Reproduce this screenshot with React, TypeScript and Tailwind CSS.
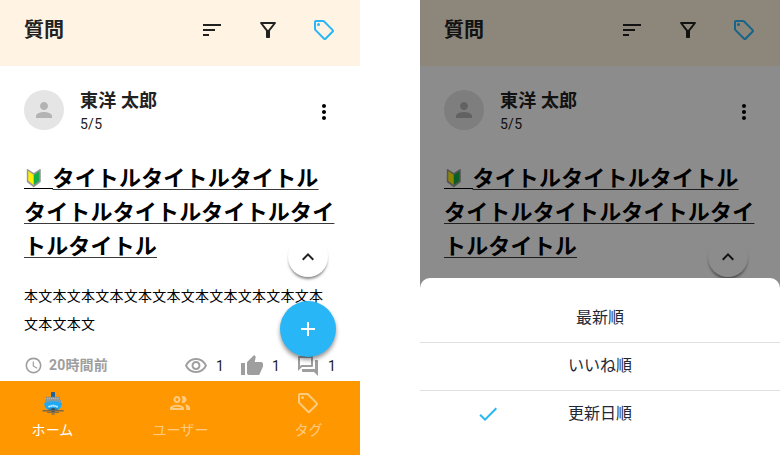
import type { ReactNode } from "react";

type IconProps = { d: string; className?: string; size?: number; children?: ReactNode };

function Icon({ d, className = "", size = 24, children }: IconProps) {
  return (
    <svg viewBox="0 0 24 24" width={size} height={size} fill="currentColor" className={`shrink-0 ${className}`}>
      <path d={d} />
      {children}
    </svg>
  );
}

const SORT = "M3 18h6v-2H3v2zM3 6v2h18V6H3zm0 7h12v-2H3v2z";
const FILTER =
  "M7 6h10l-5.01 6.3L7 6zM4.25 5.61C6.27 8.2 10 13 10 13v6c0 .55.45 1 1 1h2c.55 0 1-.45 1-1v-6s3.72-4.8 5.74-7.39A.998.998 0 0 0 18.95 4H5.04c-.83 0-1.3.95-.79 1.61z";
const TAG =
  "M21.41 11.41l-8.83-8.83C12.21 2.21 11.7 2 11.17 2H4c-1.1 0-2 .9-2 2v7.17c0 .53.21 1.04.59 1.41l8.83 8.83c.78.78 2.05.78 2.83 0l7.17-7.17c.78-.78.78-2.04-.01-2.83zM12.83 20L4 11.17V4h7.17L20 12.83 12.83 20z";
const PERSON =
  "M12 12c2.21 0 4-1.79 4-4s-1.79-4-4-4-4 1.79-4 4 1.79 4 4 4zm0 2c-2.67 0-8 1.34-8 4v2h16v-2c0-2.66-5.33-4-8-4z";
const MORE =
  "M12 8c1.1 0 2-.9 2-2s-.9-2-2-2-2 .9-2 2 .9 2 2 2zm0 2c-1.1 0-2 .9-2 2s.9 2 2 2 2-.9 2-2-.9-2-2-2zm0 6c-1.1 0-2 .9-2 2s.9 2 2 2 2-.9 2-2-.9-2-2-2z";
const UP = "M7.41 15.41L12 10.83l4.59 4.58L18 14l-6-6-6 6z";
const PLUS = "M19 13h-6v6h-2v-6H5v-2h6V5h2v6h6v2z";
const CLOCK =
  "M11.99 2C6.47 2 2 6.48 2 12s4.47 10 9.99 10C17.52 22 22 17.52 22 12S17.52 2 11.99 2zM12 20c-4.42 0-8-3.58-8-8s3.58-8 8-8 8 3.58 8 8-3.58 8-8 8zm.5-13H11v6l5.25 3.15.75-1.23-4.5-2.67z";
const EYE =
  "M12 6c3.79 0 7.17 2.13 8.82 5.5C19.17 14.87 15.79 17 12 17s-7.17-2.13-8.82-5.5C4.83 8.13 8.21 6 12 6m0-2C7 4 2.73 7.11 1 11.5 2.73 15.89 7 19 12 19s9.27-3.11 11-7.5C21.27 7.11 17 4 12 4zm0 5c1.38 0 2.5 1.12 2.5 2.5S13.38 14 12 14s-2.5-1.12-2.5-2.5S10.62 9 12 9m0-2c-2.48 0-4.5 2.02-4.5 4.5S9.52 16 12 16s4.5-2.02 4.5-4.5S14.48 7 12 7z";
const THUMB =
  "M1 21h4V9H1v12zm22-11c0-1.1-.9-2-2-2h-6.31l.95-4.57.03-.32c0-.41-.17-.79-.44-1.06L14.17 1 7.59 7.59C7.22 7.95 7 8.45 7 9v10c0 1.1.9 2 2 2h9c.83 0 1.54-.5 1.84-1.22l3.02-7.05c.09-.23.14-.47.14-.73v-2z";
const CHAT =
  "M15 4v7H5.17L4 12.17V4h11m1-2H3c-.55 0-1 .45-1 1v14l4-4h10c.55 0 1-.45 1-1V3c0-.55-.45-1-1-1zm5 4h-2v9H6v2c0 .55.45 1 1 1h11l4 4V7c0-.55-.45-1-1-1z";
const PEOPLE =
  "M16.5 13.25c1 .75 1.75 1.75 1.75 3.25V19H22v-2.5c0-2-3.2-3-5.5-3.25zM15 12c1.93 0 3.5-1.57 3.5-3.5S16.93 5 15 5c-.54 0-1.04.13-1.5.35.63.89 1 1.98 1 3.15s-.37 2.26-1 3.15c.46.22.96.35 1.5.35zM9 12c1.93 0 3.5-1.57 3.5-3.5S10.93 5 9 5 5.5 6.57 5.5 8.5 7.07 12 9 12zm0-5c.83 0 1.5.67 1.5 1.5S9.83 10 9 10s-1.5-.67-1.5-1.5S8.17 7 9 7zm0 6.75c-2.34 0-7 1.17-7 3.5V19h14v-1.75c0-2.33-4.66-3.5-7-3.5zM4.34 17c.84-.58 2.87-1.25 4.66-1.25s3.82.67 4.66 1.25H4.34z";
const CHECK = "M9 16.17L4.83 12l-1.42 1.41L9 19 21 7l-1.41-1.41z";

function TagIcon({ className }: { className: string }) {
  return (
    <Icon d={TAG} className={className}>
      <circle cx="6.5" cy="6.5" r="1.5" />
    </Icon>
  );
}

function BeginnerMark() {
  return (
    <svg viewBox="0 0 16 20" width="16" height="20" className="ml-[1.5px]">
      <path d="M1.6 1.8 L7.8 6 L14 1.8 V13.6 L7.8 18.4 L1.6 13.6 Z" fill="#999" stroke="#999" strokeWidth="1.6" strokeLinejoin="round" />
      <path d="M2.3 3 L7.8 7 V17.2 L2.3 12.8 Z" fill="#fff100" />
      <path d="M13.3 3 L7.8 7 V17.2 L13.3 12.8 Z" fill="#13ad4b" />
    </svg>
  );
}

function ShipIcon() {
  return (
    <svg viewBox="0 0 24 24" width="24" height="24" className="ml-[2px]">
      <rect x="10" y="1" width="4" height="5.4" fill="#1565a5" />
      <rect x="10" y="1" width="4" height="1.6" fill="#345f87" />
      <rect x="5" y="5.8" width="14" height="6.4" fill="#8c9396" />
      <path d="M6 7.6h12" stroke="#c3b9a5" strokeWidth="1.2" strokeDasharray="1.2 .7" />
      <rect x="4" y="9" width="16" height="3" fill="#7d9ba9" />
      <path d="M3 12.2 Q12 8.4 21 12.2 Q20.8 16 18 18.6 H6 Q3.2 16 3 12.2Z" fill="#20a9f3" />
      <path d="M7.5 16 Q12 13.4 16.7 16" stroke="#c9edff" strokeWidth="1.8" strokeDasharray="1.6 .4" fill="none" />
      <rect x="7.4" y="17.4" width="9.2" height="2.4" fill="#287fac" />
      <rect x="10.6" y="17" width="3" height="4" fill="#384e60" />
      <path d="M1.6 19.8h21" stroke="#71634b" strokeWidth="1.4" />
      <path d="M6 21.5h12" stroke="#876f48" strokeWidth="1.1" />
      <path d="M10.4 23h3.4" stroke="#5f6965" strokeWidth="1.1" />
    </svg>
  );
}

function Stat({ d }: { d: string }) {
  return (
    <div className="flex w-14 shrink-0 items-center gap-2">
      <Icon d={d} />
      <span className="text-sm leading-5 tracking-[0.25px] text-[#212121]">1</span>
    </div>
  );
}

function FeedPage({ headerClass, children }: { headerClass: string; children?: ReactNode }) {
  return (
    <div className="h-full w-full bg-white">
      <header className={`flex h-[66px] items-start pt-[18px] pr-6 pl-6 text-[#212121] ${headerClass}`}>
        <h1 className="h-6 grow text-[20px] leading-6 font-bold">質問</h1>
        <div className="flex gap-8">
          <Icon d={SORT} />
          <Icon d={FILTER} />
          <TagIcon className="text-[#29b6f6]" />
        </div>
      </header>
      <article className="pt-6 pl-6">
        <div className="flex pr-6">
          <div className="flex h-10 w-10 items-center justify-center rounded-full bg-[#e5e5e5] text-[#b3b3b3]">
            <Icon d={PERSON} />
          </div>
          <div className="ml-4 grow">
            <p className="-mt-px h-6 text-[18px] leading-6 font-bold tracking-[0.15px] text-[#212121]">東洋 太郎</p>
            <p className="mt-px text-sm leading-5 tracking-[0.25px] text-[#212121]">5/5</p>
          </div>
          <Icon d={MORE} className="mt-[10px] text-black" />
        </div>
        <h2 className="mt-7 w-[316px] text-[22px] leading-[34px] font-bold tracking-[0.17px] text-black underline decoration-[#3a3a3a] decoration-1 underline-offset-[3px]">
          <span className="inline-flex h-[21px] w-[28.5px] items-start border-b border-black align-[-2px]">
            <BeginnerMark />
          </span>
          タイトルタイトルタイトル
          <br />
          タイトルタイトルタイトルタイ
          <br />
          トルタイトル
        </h2>
        <p className="mt-[18px] text-sm leading-7 tracking-[0.25px] text-black">
          本文本文本文本文本文本文本文本文本文本文本
          <br />
          文本文本文
        </p>
        {children}
      </article>
      <div className="absolute top-[237px] left-[288px] flex h-10 w-10 items-center justify-center rounded-full bg-white text-[#212121] shadow-[0_3px_3px_-1px_rgba(0,0,0,0.5)]">
        <Icon d={UP} />
      </div>
    </div>
  );
}

function PostStats() {
  return (
    <div className="mt-4 flex items-center text-[#9e9e9e]">
      <Icon d={CLOCK} size={19} className="-mt-0.5" />
      <span className="-mt-0.5 ml-[6px] w-[135px] shrink-0 text-sm leading-6 font-bold tracking-[0.17px]">20時間前</span>
      <Stat d={EYE} />
      <Stat d={THUMB} />
      <Stat d={CHAT} />
    </div>
  );
}

function NavItem({ icon, label, className }: { icon: ReactNode; label: string; className: string }) {
  return (
    <div className={`flex w-32 shrink-0 flex-col items-center ${className}`}>
      {icon}
      <span className="mt-[5px] ml-px text-sm leading-5 tracking-[0.1px]">{label}</span>
    </div>
  );
}

function HomeScreen() {
  return (
    <section className="relative h-[455px] w-[360px] overflow-hidden">
      <FeedPage headerClass="bg-[#fff4e3]">
        <PostStats />
      </FeedPage>
      <div className="absolute top-[301px] left-[280px] flex h-14 w-14 items-center justify-center rounded-full bg-[#29b6f6] text-white shadow-[0_3px_4px_rgba(0,0,0,0.42)]">
        <Icon d={PLUS} />
      </div>
      <nav className="absolute bottom-0 left-0 flex h-[74px] w-full justify-center bg-[#ff9800] pt-[10px]">
        <NavItem icon={<ShipIcon />} label="ホーム" className="text-white" />
        <NavItem icon={<Icon d={PEOPLE} />} label="ユーザー" className="text-[#ffcb80]" />
        <NavItem icon={<TagIcon className="" />} label="タグ" className="text-[#ffcb80]" />
      </nav>
    </section>
  );
}

function SortOption({ label, checked = false }: { label: string; checked?: boolean }) {
  return (
    <li className="grid h-12 grid-cols-[136px_88px_136px] items-center border-b border-[#dfdfdf] last:border-b-0">
      <span className="flex justify-center pb-0.5">{checked && <Icon d={CHECK} className="text-[#29b6f6]" />}</span>
      <span className="pb-0.5 text-center text-base leading-6 text-[#1f2937]">{label}</span>
    </li>
  );
}

function SortSheetScreen() {
  return (
    <section className="relative h-[455px] w-[360px] overflow-hidden">
      <FeedPage headerClass="bg-[#fff5e0]" />
      <div className="absolute inset-0 bg-black/45" />
      <ul className="absolute bottom-0 left-0 h-[177px] w-full rounded-t-[10px] bg-white pt-[17px]">
        <SortOption label="最新順" />
        <SortOption label="いいね順" />
        <SortOption label="更新日順" checked />
      </ul>
    </section>
  );
}

export default function App() {
  return (
    <main className="flex h-[455px] w-[780px] justify-between overflow-hidden bg-white font-[Roboto,'Noto_Sans_CJK_JP',sans-serif]">
      <HomeScreen />
      <SortSheetScreen />
    </main>
  );
}
